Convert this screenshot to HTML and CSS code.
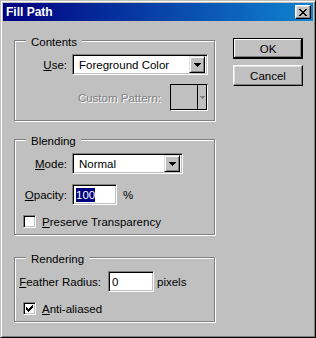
FILE: index.html
```html
<!DOCTYPE html>
<html lang="en">
<head>
    <meta charset="UTF-8">
    <meta name="viewport" content="width=device-width, initial-scale=1.0">
    <title>Fill Path</title>
    <link rel="stylesheet" href="styles.css">
</head>
<body>
    <div class="window">
        <div class="titlebar">
            <span class="title">Fill Path</span>
            <button class="close-btn" aria-label="Close">
                <svg width="8" height="7" viewBox="0 0 8 7" shape-rendering="crispEdges"><path d="M0 0h2v1H0z M6 0h2v1H6z M1 1h2v1H1z M5 1h2v1H5z M2 2h4v1H2z M3 3h2v1H3z M2 4h4v1H2z M1 5h2v1H1z M5 5h2v1H5z M0 6h2v1H0z M6 6h2v1H6z" fill="#000"/></svg>
            </button>
        </div>

        <div class="dialog-body">
            <div class="groups">
                <div class="group group-contents">
                    <span class="group-title">Contents</span>
                    <div class="row">
                        <span class="field-label w-short"><u>U</u>se:</span>
                        <div class="combo sunken combo-use">
                            <span class="combo-text">Foreground Color</span>
                            <span class="combo-btn">
                                <svg width="7" height="4" viewBox="0 0 7 4" shape-rendering="crispEdges"><path d="M0 0h7v1H0z M1 1h5v1H1z M2 2h3v1H2z M3 3h1v1H3z" fill="#000"/></svg>
                            </span>
                        </div>
                    </div>
                    <div class="row row-pattern">
                        <span class="field-label w-pattern disabled">Custom Pattern:</span>
                        <div class="pattern-picker">
                            <span class="pattern-swatch"></span>
                            <span class="pattern-arrow">
                                <svg width="5" height="3" viewBox="0 0 5 3" shape-rendering="crispEdges"><path d="M0 0h5v1H0z M1 1h3v1H1z M2 2h1v1H2z" fill="#808080"/></svg>
                            </span>
                        </div>
                    </div>
                </div>

                <div class="group group-blending">
                    <span class="group-title">Blending</span>
                    <div class="row">
                        <span class="field-label w-short"><u>M</u>ode:</span>
                        <div class="combo sunken combo-mode">
                            <span class="combo-text">Normal</span>
                            <span class="combo-btn">
                                <svg width="7" height="4" viewBox="0 0 7 4" shape-rendering="crispEdges"><path d="M0 0h7v1H0z M1 1h5v1H1z M2 2h3v1H2z M3 3h1v1H3z" fill="#000"/></svg>
                            </span>
                        </div>
                    </div>
                    <div class="row row-gap">
                        <span class="field-label w-short"><u>O</u>pacity:</span>
                        <div class="textbox sunken tb-opacity"><span class="selected">100</span></div>
                        <span class="unit unit-pct">%</span>
                    </div>
                    <div class="row row-gap row-check">
                        <span class="checkbox sunken"></span>
                        <span class="check-label"><u>P</u>reserve Transparency</span>
                    </div>
                </div>

                <div class="group group-rendering">
                    <span class="group-title">Rendering</span>
                    <div class="row">
                        <span class="field-label w-feather"><u>F</u>eather Radius:</span>
                        <div class="textbox sunken tb-feather">0</div>
                        <span class="unit unit-px">pixels</span>
                    </div>
                    <div class="row row-gap row-check">
                        <span class="checkbox sunken">
                            <svg width="7" height="7" viewBox="0 0 7 7" shape-rendering="crispEdges"><path d="M6 0h1v1H6z M5 1h2v1H5z M0 2h1v1H0z M4 2h3v1H4z M0 3h2v1H0z M3 3h3v1H3z M0 4h5v1H0z M1 5h3v1H1z M2 6h1v1H2z" fill="#000"/></svg>
                        </span>
                        <span class="check-label"><u>A</u>nti-aliased</span>
                    </div>
                </div>
            </div>

            <div class="buttons">
                <button class="btn btn-default">OK</button>
                <button class="btn">Cancel</button>
            </div>
        </div>
    </div>
</body>
</html>
```

FILE: styles.css
```css
body {
    margin: 0;
    background: #c0c0c0;
    font-family: 'Liberation Sans', Arial, sans-serif;
    font-size: 11.5px;
    color: #000000;
}
.window {
    width: 316px;
    height: 338px;
    box-sizing: border-box;
    padding: 2px;
    background: #c0c0c0;
    border: 1px solid;
    border-color: #c0c0c0 #000000 #000000 #c0c0c0;
    box-shadow: inset 1px 1px #ffffff, inset -1px -1px #808080;
}

/* Title bar */
.titlebar {
    height: 18px;
    display: flex;
    align-items: center;
    justify-content: space-between;
    padding: 0 2px 0 3px;
    background: linear-gradient(90deg, #000080, #1084d0);
}
.title {
    color: #ffffff;
    font-weight: bold;
    font-size: 12px;
}
.close-btn {
    width: 16px;
    height: 14px;
    padding: 0;
    box-sizing: border-box;
    display: flex;
    align-items: center;
    justify-content: center;
    background: #c0c0c0;
    border: 1px solid;
    border-color: #ffffff #000000 #000000 #ffffff;
    box-shadow: inset -1px -1px #808080, inset 1px 1px #dfdfdf;
}

/* Body layout */
.dialog-body {
    display: flex;
    align-items: flex-start;
    gap: 18px;
    padding: 17px 0 0 11px;
}
.groups {
    width: 201px;
    margin-top: 2px;
    display: flex;
    flex-direction: column;
}
.group {
    position: relative;
    box-sizing: border-box;
    padding-top: 13px;
    border: 1px solid #808080;
    box-shadow: inset 1px 1px #ffffff, 1px 1px #ffffff;
}
.group-contents {
    height: 81px;
}
.group-blending {
    height: 96px;
    margin-top: 18px;
}
.group-rendering {
    height: 65px;
    margin-top: 22px;
}
.group-title {
    position: absolute;
    top: -6px;
    left: 11px;
    padding: 0 5px;
    line-height: 14px;
    background: #c0c0c0;
}

/* Rows */
.row {
    display: flex;
    align-items: center;
    height: 21px;
}
.row-pattern {
    height: 27px;
    margin-top: 9px;
}
.row-gap {
    margin-top: 10px;
}
.row-check {
    height: 13px;
    padding-left: 8px;
}
.field-label {
    flex: none;
    text-align: right;
    margin-right: 5px;
    white-space: nowrap;
}
.w-short {
    width: 52px;
}
.w-pattern {
    width: 146px;
    margin-right: 9px;
}
.w-feather {
    width: 86px;
    margin-right: 7px;
}
.disabled {
    color: #808080;
    text-shadow: 1px 1px 0 #ffffff;
}

/* Sunken controls */
.sunken {
    box-sizing: border-box;
    background: #ffffff;
    border: 1px solid;
    border-color: #808080 #ffffff #ffffff #808080;
    box-shadow: inset 1px 1px #000000, inset -1px -1px #c0c0c0;
}
.combo {
    height: 21px;
    padding: 2px;
    display: flex;
    align-items: center;
}
.combo-use {
    width: 136px;
}
.combo-mode {
    width: 111px;
}
.combo-text {
    flex: 1;
    padding-left: 4px;
    white-space: nowrap;
}
.combo-btn {
    width: 16px;
    height: 17px;
    box-sizing: border-box;
    display: flex;
    align-items: center;
    justify-content: center;
    background: #c0c0c0;
    border: 1px solid;
    border-color: #dfdfdf #000000 #000000 #dfdfdf;
    box-shadow: inset 1px 1px #ffffff, inset -1px -1px #808080;
}
.textbox {
    height: 21px;
    padding: 0 2px 0 3px;
    display: flex;
    align-items: center;
}
.tb-opacity {
    width: 45px;
}
.tb-feather {
    width: 46px;
}
.selected {
    background: #000080;
    color: #ffffff;
    line-height: 14px;
}
.unit-pct {
    margin-left: 6px;
}
.unit-px {
    margin-left: 3px;
}

/* Custom pattern picker (disabled) */
.pattern-picker {
    width: 38px;
    height: 27px;
    box-sizing: border-box;
    display: flex;
    border: 1px solid;
    border-color: #000000 #ffffff #ffffff #000000;
    box-shadow: inset -1px -1px #000000;
}
.pattern-swatch {
    width: 26px;
    border-right: 1px solid #000000;
}
.pattern-arrow {
    flex: 1;
    display: flex;
    align-items: center;
    justify-content: center;
}

/* Checkboxes */
.checkbox {
    width: 13px;
    height: 13px;
    flex: none;
    display: flex;
    align-items: center;
    justify-content: center;
}
.check-label {
    margin-left: 6px;
}

/* Buttons */
.buttons {
    display: flex;
    flex-direction: column;
    gap: 6px;
}
.btn {
    width: 70px;
    height: 21px;
    padding: 0;
    box-sizing: border-box;
    font-family: inherit;
    font-size: inherit;
    color: #000000;
    background: #c0c0c0;
    border: 1px solid;
    border-color: #ffffff #000000 #000000 #ffffff;
    box-shadow: inset -1px -1px #808080, inset 1px 1px #dfdfdf;
}
.btn-default {
    border-color: #000000;
    box-shadow: inset -1px -1px #000000, inset 1px 1px #ffffff, inset -2px -2px #808080;
}
```
